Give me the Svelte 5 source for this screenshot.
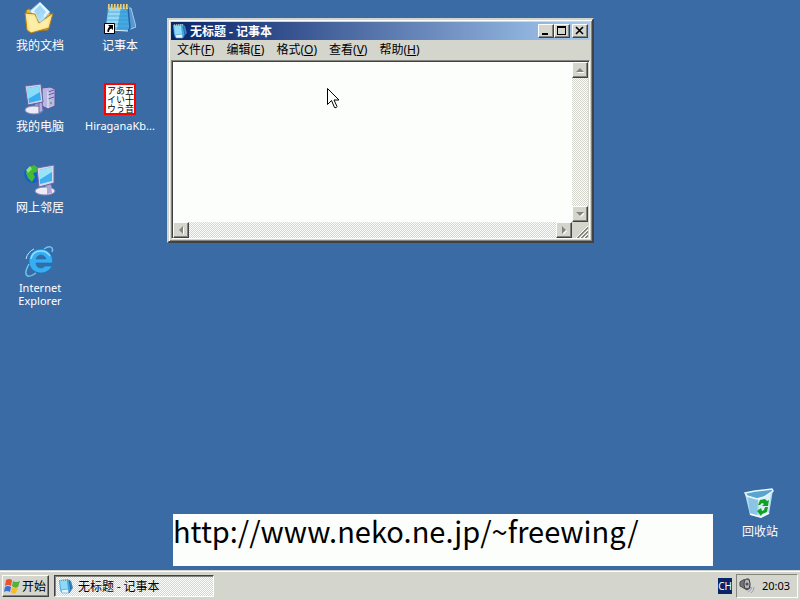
<script lang="ts">
  type Shortcut = { id: string; label: string; latin?: boolean };

  const shortcuts: Shortcut[] = [
    { id: 'documents', label: '我的文档' },
    { id: 'computer', label: '我的电脑' },
    { id: 'network', label: '网上邻居' },
    { id: 'browser', label: 'Internet Explorer', latin: true },
    { id: 'notepad', label: '记事本' },
    { id: 'kana', label: 'HiraganaKb...', latin: true }
  ];

  const menus = [
    { label: '文件', key: 'F' },
    { label: '编辑', key: 'E' },
    { label: '格式', key: 'O' },
    { label: '查看', key: 'V' },
    { label: '帮助', key: 'H' }
  ];

  const kana = '五十音\nあいう\nアイウ';

  let title = $state('无标题 - 记事本');
  let content = $state('');
</script>

{#snippet notepadIcon(size: number)}
  <svg width={size} height={size} viewBox="0 0 32 32" aria-hidden="true">
    <path d="M24 6l3 0 5 19-8 3z" fill="#5a96d0" stroke="#bcdcf2" stroke-width=".8" />
    <path d="M4 4h21l1 22-2 3-19-1-3-4z" fill="#46a8e0" />
    <path d="M5 5h12l-4 22-8 1-3-4z" fill="#a8e4f6" opacity=".8" />
    <path d="M24 5l2 21-2 3" fill="none" stroke="#1d62a8" stroke-width="1.5" />
    <path d="M4 10h20M4 14h20M3 18h22M3 22h22M4 26h21" stroke="#3290cc" stroke-width=".6" />
    <path d="M2 24l3 4 19 1" fill="none" stroke="#dff4fc" />
    <path d="M5 2v5M8 2v5M11 2v5M14 2v5M17 2v5M20 2v5M23 2v5" stroke="#e8d080" stroke-width="2" />
    <path d="M6 2v4M9 2v4M12 2v4M15 2v4M18 2v4M21 2v4M24 2v4" stroke="#7c6c40" stroke-width=".7" />
  </svg>
{/snippet}

{#snippet smallNotepadIcon()}
  <svg width="16" height="16" viewBox="0 0 16 16" aria-hidden="true">
    <path d="M11 2l2 1 2 7-3 3z" fill="#3c7cc0" />
    <path d="M1 2l9-1 2 1 1 10-2 3-8-1-1-3z" fill="#44a4e0" />
    <path d="M2 3h7l1 8-7 1z" fill="#8cdaf6" />
    <path d="M2 2h9" stroke="#f4ecc0" stroke-dasharray="1 1" />
    <path d="M3 12l7-1 1 4-7 0z" fill="#e4f4fc" stroke="#5c98c8" stroke-width=".6" />
    <path d="M11 2l2 10-2 3" fill="none" stroke="#1c5ca4" stroke-width=".8" />
  </svg>
{/snippet}

{#snippet desktopIcon(id: string)}
  {#if id === 'documents'}
    <svg width="32" height="32" viewBox="0 0 32 32" aria-hidden="true">
      <path d="M2 9l2-2 6 1 3 3 12-1 2 3-3 15-20 1z" fill="#e9b93c" stroke="#a8741c" />
      <path d="M6 9L16 0l10 10-11 13z" fill="#e6f5fd" stroke="#8cbcdc" />
      <path d="M10 9l6-6 6 7-6 8z" fill="#9ed6f4" />
      <path d="M1 11l10 1 4 9 14-10-4 15-18 5-4-3z" fill="#fbe48a" stroke="#b47c18" />
      <path d="M3 13l7 1 4 9 11-7-2 9-16 4z" fill="#fdf2b4" opacity=".7" />
      <path d="M12 15l4 6 5-4-3-8z" fill="#a8dcf4" opacity=".8" />
    </svg>
  {:else if id === 'computer'}
    <svg width="32" height="32" viewBox="0 0 32 32" aria-hidden="true">
      <path d="M18 5l8-1 5 2v17l-7 3-6-3z" fill="#b9b8e2" stroke="#57559a" />
      <path d="M24 9l6-2M24 12l6-2M24 16l6-2" stroke="#5e5ca4" />
      <path d="M24 8v17" stroke="#e9e9fb" />
      <circle cx="27" cy="20" r="1" fill="#54a858" />
      <path d="M11 20l6-1 1 6-7 1z" fill="#9695c8" />
      <ellipse cx="10" cy="27" rx="9" ry="4" fill="#ebebf6" stroke="#8986b4" />
      <path d="M15 20l3-1 1 9-4 2z" fill="#b5b1dc" stroke="#6f6ba8" />
      <path d="M1 3l16-2 2 18L4 22z" fill="#cfcfe8" stroke="#6562a0" />
      <path d="M3 5l12-2 2 14L5 20z" fill="#36aef0" />
      <path d="M3 5l12-2 1 6-12 7z" fill="#8adcfb" />
    </svg>
  {:else if id === 'network'}
    <svg width="32" height="32" viewBox="0 0 32 32" aria-hidden="true">
      <circle cx="9" cy="10" r="9" fill="#1760c8" />
      <path d="M5 3l5-2 5 3-2 4-4 1 2 4-3 5-4-4-2-5z" fill="#45ba35" />
      <path d="M2 6l4-4 2 3-4 4z" fill="#96e070" />
      <path d="M21 20h6l1 8h-7z" fill="#9593cc" />
      <ellipse cx="21" cy="27" rx="10" ry="4" fill="#ececf6" stroke="#8b87b2" />
      <path d="M23 20l4 1 1 8-5 1z" fill="#aaa7d5" />
      <path d="M13 4l17-3v18l-15 4z" fill="#d6d6ec" stroke="#6b68a3" />
      <path d="M15 6l13-3v14l-12 3z" fill="#3eb0ef" />
      <path d="M15 6l13-3v5l-13 8z" fill="#9ce3fa" />
    </svg>
  {:else if id === 'browser'}
    <svg width="32" height="32" viewBox="0 0 32 32" aria-hidden="true">
      <path d="M28 12c-2-5-6-8-11-8C10 4 5 9 5 16s5 12 12 12c5 0 9-3 11-7h-7c-1 1-2 2-4 2-3 0-5-2-5-5h16.500c0-2 0-4-.500-6zM12 14c1-3 3-4 5-4s4 1 5 4z" fill="#38aef2" fill-rule="evenodd" stroke="#1475bd" stroke-width=".7" />
      <path d="M7 14C8 8 12 6 17 6c4 0 7 2 9 5" fill="none" stroke="#91ddfb" stroke-width="1.500" />
      <path d="M20 4c6-4 10-2 8 3M5 19c-4 7-4 11-1 12 2 1 5-1 8-3" fill="none" stroke="#69c4f2" stroke-width="1.500" />
      <path d="M2 14c1-5 4-8 8-10" fill="none" stroke="#b9eaff" />
    </svg>
  {:else if id === 'notepad'}
    <span class="with-arrow">
      {@render notepadIcon(32)}
      <svg class="arrow" width="11" height="11" viewBox="0 0 11 11" aria-hidden="true">
        <path d="M.5.500h10v10H.5z" fill="#fff" stroke="#000" />
        <path d="M4 2h5v5L7.500 5.500C5.500 6 5 7.500 5 9H3.500C3 7 4 5 5.500 3.500z" />
      </svg>
    </span>
  {:else if id === 'kana'}
    <span class="kana">{kana}</span>
  {:else if id === 'bin'}
    <svg width="32" height="32" viewBox="0 0 32 32" aria-hidden="true">
      <path d="M1 6l28-4-4 24-8 4-11-3z" fill="#b4dcee" />
      <path d="M4 9l10 2-1 17-7-2z" fill="#8cc4e4" />
      <path d="M14 11l13-6-3 20-8 4z" fill="#dceff6" />
      <path d="M1 5l10-2 17-2 1 2-9 6-7 2-10-3z" fill="#5aa4d0" stroke="#e8f8fe" stroke-width="1.500" />
      <path d="M6 26l11 3 8-4" fill="none" stroke="#f4fcfe" stroke-width="1.500" />
      <path d="M14 17l2-5 5-1 2 2 2-1-1 6h-6l2-2-2-1-2 2zM24 19l-1 5-5 2-1 2-4-5 4-3 1 3 2-1 1-3z" fill="#12a028" />
    </svg>
  {/if}
{/snippet}

<div class="screen">
  <main class="desktop">
    <nav class="shortcuts">
      {#each shortcuts as item (item.id)}
        <button class="shortcut">
          {@render desktopIcon(item.id)}
          <span class="label" class:latin={item.latin}>{item.label}</span>
        </button>
      {/each}
    </nav>

    <section class="window">
      <header class="titlebar">
        {@render smallNotepadIcon()}
        <h1>{title}</h1>
        <button class="caption" aria-label="最小化">
          <svg width="12" height="10" viewBox="0 0 12 10"><path d="M2 7h6v2H2z" /></svg>
        </button>
        <button class="caption" aria-label="最大化">
          <svg width="12" height="10" viewBox="0 0 12 10"><path d="M1 0h9v9H1zM2 2v6h7V2z" fill-rule="evenodd" /></svg>
        </button>
        <button class="caption close" aria-label="关闭">
          <svg width="12" height="10" viewBox="0 0 12 10"><path d="M2 1l7 7M9 1L2 8" stroke="#000" stroke-width="1.600" /></svg>
        </button>
      </header>

      <nav class="menubar">
        {#each menus as menu}
          <button>{menu.label}<span>(<u>{menu.key}</u>)</span></button>
        {/each}
      </nav>

      <div class="editor">
        <textarea bind:value={content} aria-label="文本" spellcheck="false"></textarea>
        <div class="scroll vertical">
          <button aria-label="向上滚动"><svg width="8" height="8" viewBox="0 0 8 8"><path d="M1 7h8L5 3z" fill="#fff" /><path d="M0 6h8L4 2z" fill="#85857f" /></svg></button>
          <button aria-label="向下滚动"><svg width="8" height="8" viewBox="0 0 8 8"><path d="M1 3h8L5 7z" fill="#fff" /><path d="M0 2h8L4 6z" fill="#85857f" /></svg></button>
        </div>
        <div class="scroll">
          <button aria-label="向左滚动"><svg width="8" height="8" viewBox="0 0 8 8"><path d="M7 1v8L3 5z" fill="#fff" /><path d="M6 0v8L2 4z" fill="#85857f" /></svg></button>
          <button aria-label="向右滚动"><svg width="8" height="8" viewBox="0 0 8 8"><path d="M3 1v8l4-4z" fill="#fff" /><path d="M2 0v8l4-4z" fill="#85857f" /></svg></button>
        </div>
        <svg width="16" height="16" viewBox="0 0 16 16" aria-hidden="true">
          <path d="M4 16L16 4M8 16l8-8M12 16l4-4" stroke="#fff" />
          <path d="M5 16L16 5M6 16L16 6M9 16l7-7M10 16l6-6M13 16l3-3M14 16l2-2" stroke="#85857f" />
        </svg>
      </div>
    </section>

    <p class="banner">http://www.neko.ne.jp/~freewing/</p>

    <button class="shortcut bin">
      {@render desktopIcon('bin')}
      <span class="label">回收站</span>
    </button>

    <svg class="pointer" width="13" height="22" viewBox="0 0 13 22" aria-hidden="true">
      <path d="M.5.500v16l4-4 3 7q2 1 2.500-1l-3-6.500h5z" fill="#fff" stroke="#000" />
    </svg>
  </main>

  <footer class="taskbar">
    <button class="start">
      <svg width="16" height="16" viewBox="0 0 16 16" aria-hidden="true">
        <path d="M2 2q3-2 6 0L7 8Q4 6 1 8z" fill="#e8542c" />
        <path d="M9 3q3 2 7 0l-2 6q-3 2-6-1z" fill="#58b03c" />
        <path d="M1 9q3-2 6 0l-1 5q-3-2-6 0z" fill="#3c70d8" />
        <path d="M8 9q3 2 6 1l-2 5q-3 2-5-1z" fill="#f4bc28" />
      </svg>
      开始
    </button>
    <button class="task">
      {@render smallNotepadIcon()}
      {title}
    </button>
    <span class="lang">CH</span>
    <div class="tray">
      <svg width="16" height="16" viewBox="0 0 16 16" aria-hidden="true">
        <path d="M1 4l3-2 6-1 1 9-3 2-5-3-2-1z" fill="#77777a" stroke="#444448" />
        <ellipse cx="8" cy="6" rx="3" ry="5" fill="#b8b8ba" stroke="#3c3c40" />
        <circle cx="8" cy="6" r="1.500" fill="#505056" />
        <path d="M9 14q3-1 4-5M12 15q3-2 3-6" fill="none" stroke="#9898dc" />
      </svg>
      <time>20:03</time>
    </div>
  </footer>
</div>

<style>
  :global(body) {
    margin: 0;
  }

  .screen {
    --face: #d4d5cc;
    --light: #fcfefc;
    --shadow: #85857f;
    --dark: #424244;
    display: flex;
    flex-direction: column;
    min-height: 100vh;
    font-family: 'Noto Sans CJK SC', sans-serif;
    font-size: 12px;
    line-height: 14px;
    color: #000;
    cursor: default;
  }

  button {
    margin: 0;
    padding: 0;
    border: none;
    background: none;
    font: inherit;
    color: inherit;
  }

  svg {
    display: block;
    flex: none;
  }

  .desktop {
    position: relative;
    flex: 1;
    overflow: hidden;
    background: #3a6ba5;
  }

  /* desktop icons */
  .shortcuts {
    display: grid;
    grid-auto-flow: column;
    grid-template-rows: repeat(4, 81px);
    grid-auto-columns: 80px;
    padding-top: 2px;
    width: max-content;
  }

  .shortcut {
    display: flex;
    flex-direction: column;
    align-items: center;
    gap: 4px;
    width: 80px;
    color: #fff;
  }

  .label {
    max-width: 72px;
    line-height: 13px;
  }

  .latin {
    font-family: 'Noto Sans', sans-serif;
    font-size: 11px;
  }

  .with-arrow {
    position: relative;
  }

  .arrow {
    position: absolute;
    left: 0;
    bottom: 0;
  }

  .kana {
    box-sizing: border-box;
    width: 32px;
    height: 32px;
    border: 2px solid #f00;
    background: #fff;
    color: #000;
    font-family: 'Noto Sans CJK JP', sans-serif;
    font-size: 9px;
    line-height: 9px;
    text-align: center;
    white-space: pre;
    writing-mode: vertical-rl;
  }

  .bin {
    position: absolute;
    right: 0;
    bottom: 33px;
  }

  .banner {
    position: absolute;
    left: 173px;
    bottom: 4px;
    box-sizing: border-box;
    width: 540px;
    height: 52px;
    margin: 0;
    background: var(--light);
    font-family: 'Noto Sans CJK JP', sans-serif;
    font-size: 29px;
    line-height: 32px;
    white-space: nowrap;
  }

  .pointer {
    position: absolute;
    left: 327px;
    top: 88px;
  }

  /* notepad window */
  .window {
    position: absolute;
    left: 167px;
    top: 18px;
    display: flex;
    flex-direction: column;
    box-sizing: border-box;
    width: 427px;
    height: 225px;
    padding: 2px;
    border: 2px solid;
    border-color: var(--face) var(--dark) var(--dark) var(--face);
    box-shadow: inset 1px 1px var(--light), inset -1px -1px var(--shadow);
    background: var(--face);
  }

  .titlebar {
    display: flex;
    align-items: center;
    height: 18px;
    padding: 0 2px 0 1px;
    background: linear-gradient(to right, #0a246a, #a6caf0);
    color: #fff;
  }

  .titlebar h1 {
    flex: 1;
    margin: 0 0 0 2px;
    font-size: 12px;
    font-weight: bold;
    line-height: 16px;
  }

  .caption {
    display: grid;
    place-items: center;
    width: 16px;
    height: 14px;
  }

  .caption,
  .scroll button,
  .start {
    box-sizing: border-box;
    border: 1px solid;
    border-color: var(--light) var(--dark) var(--dark) var(--light);
    box-shadow: inset -1px -1px var(--shadow);
    background: var(--face);
  }

  .close {
    margin-left: 2px;
  }

  .menubar {
    display: flex;
    align-items: flex-start;
    height: 20px;
  }

  .menubar button {
    padding: 0 6px;
    line-height: 18px;
  }

  .menubar span {
    font-family: 'Noto Sans', sans-serif;
  }

  .editor {
    display: grid;
    flex: 1;
    grid-template-columns: 1fr 16px;
    grid-template-rows: 1fr 16px;
    border: 1px solid;
    border-color: var(--shadow) var(--light) var(--light) var(--shadow);
    box-shadow: inset 1px 1px var(--dark);
    padding: 1px 1px 0;
  }

  textarea {
    box-sizing: border-box;
    width: 100%;
    height: 100%;
    padding: 2px;
    border: none;
    outline: none;
    resize: none;
    overflow: hidden;
    background: var(--light);
    font: inherit;
    line-height: 16px;
  }

  .scroll {
    display: flex;
    justify-content: space-between;
    background: repeating-conic-gradient(var(--light) 0 25%, var(--face) 0 50%) 0 0 / 2px 2px;
  }

  .vertical {
    flex-direction: column;
  }

  .scroll button {
    display: grid;
    place-items: center;
    width: 16px;
    height: 16px;
  }

  /* taskbar */
  .taskbar {
    display: flex;
    align-items: center;
    gap: 4px;
    box-sizing: border-box;
    height: 30px;
    padding: 0 2px;
    border-top: 1px solid var(--face);
    box-shadow: inset 0 1px var(--light);
    background: var(--face);
  }

  .start,
  .task {
    display: flex;
    align-items: center;
    height: 22px;
  }

  .start {
    gap: 2px;
    padding: 0 2px 0 1px;
  }

  .task {
    box-sizing: border-box;
    flex: 0 1 160px;
    gap: 4px;
    margin-left: 1px;
    padding-left: 3px;
    border: 1px solid;
    border-color: var(--dark) var(--light) var(--light) var(--dark);
    box-shadow: inset 1px 1px var(--shadow);
    background: repeating-conic-gradient(var(--light) 0 25%, var(--face) 0 50%) 0 0 / 2px 2px;
    white-space: nowrap;
  }

  .lang {
    margin-left: auto;
    background: #0a246a;
    color: #fff;
    font-family: 'Noto Sans', sans-serif;
    font-size: 10px;
    line-height: 16px;
  }

  .tray {
    display: flex;
    align-items: center;
    gap: 7px;
    box-sizing: border-box;
    height: 24px;
    padding: 0 7px 0 2px;
    border: 1px solid;
    border-color: var(--shadow) var(--light) var(--light) var(--shadow);
    font-family: 'Noto Sans', sans-serif;
    font-size: 11px;
  }
</style>
